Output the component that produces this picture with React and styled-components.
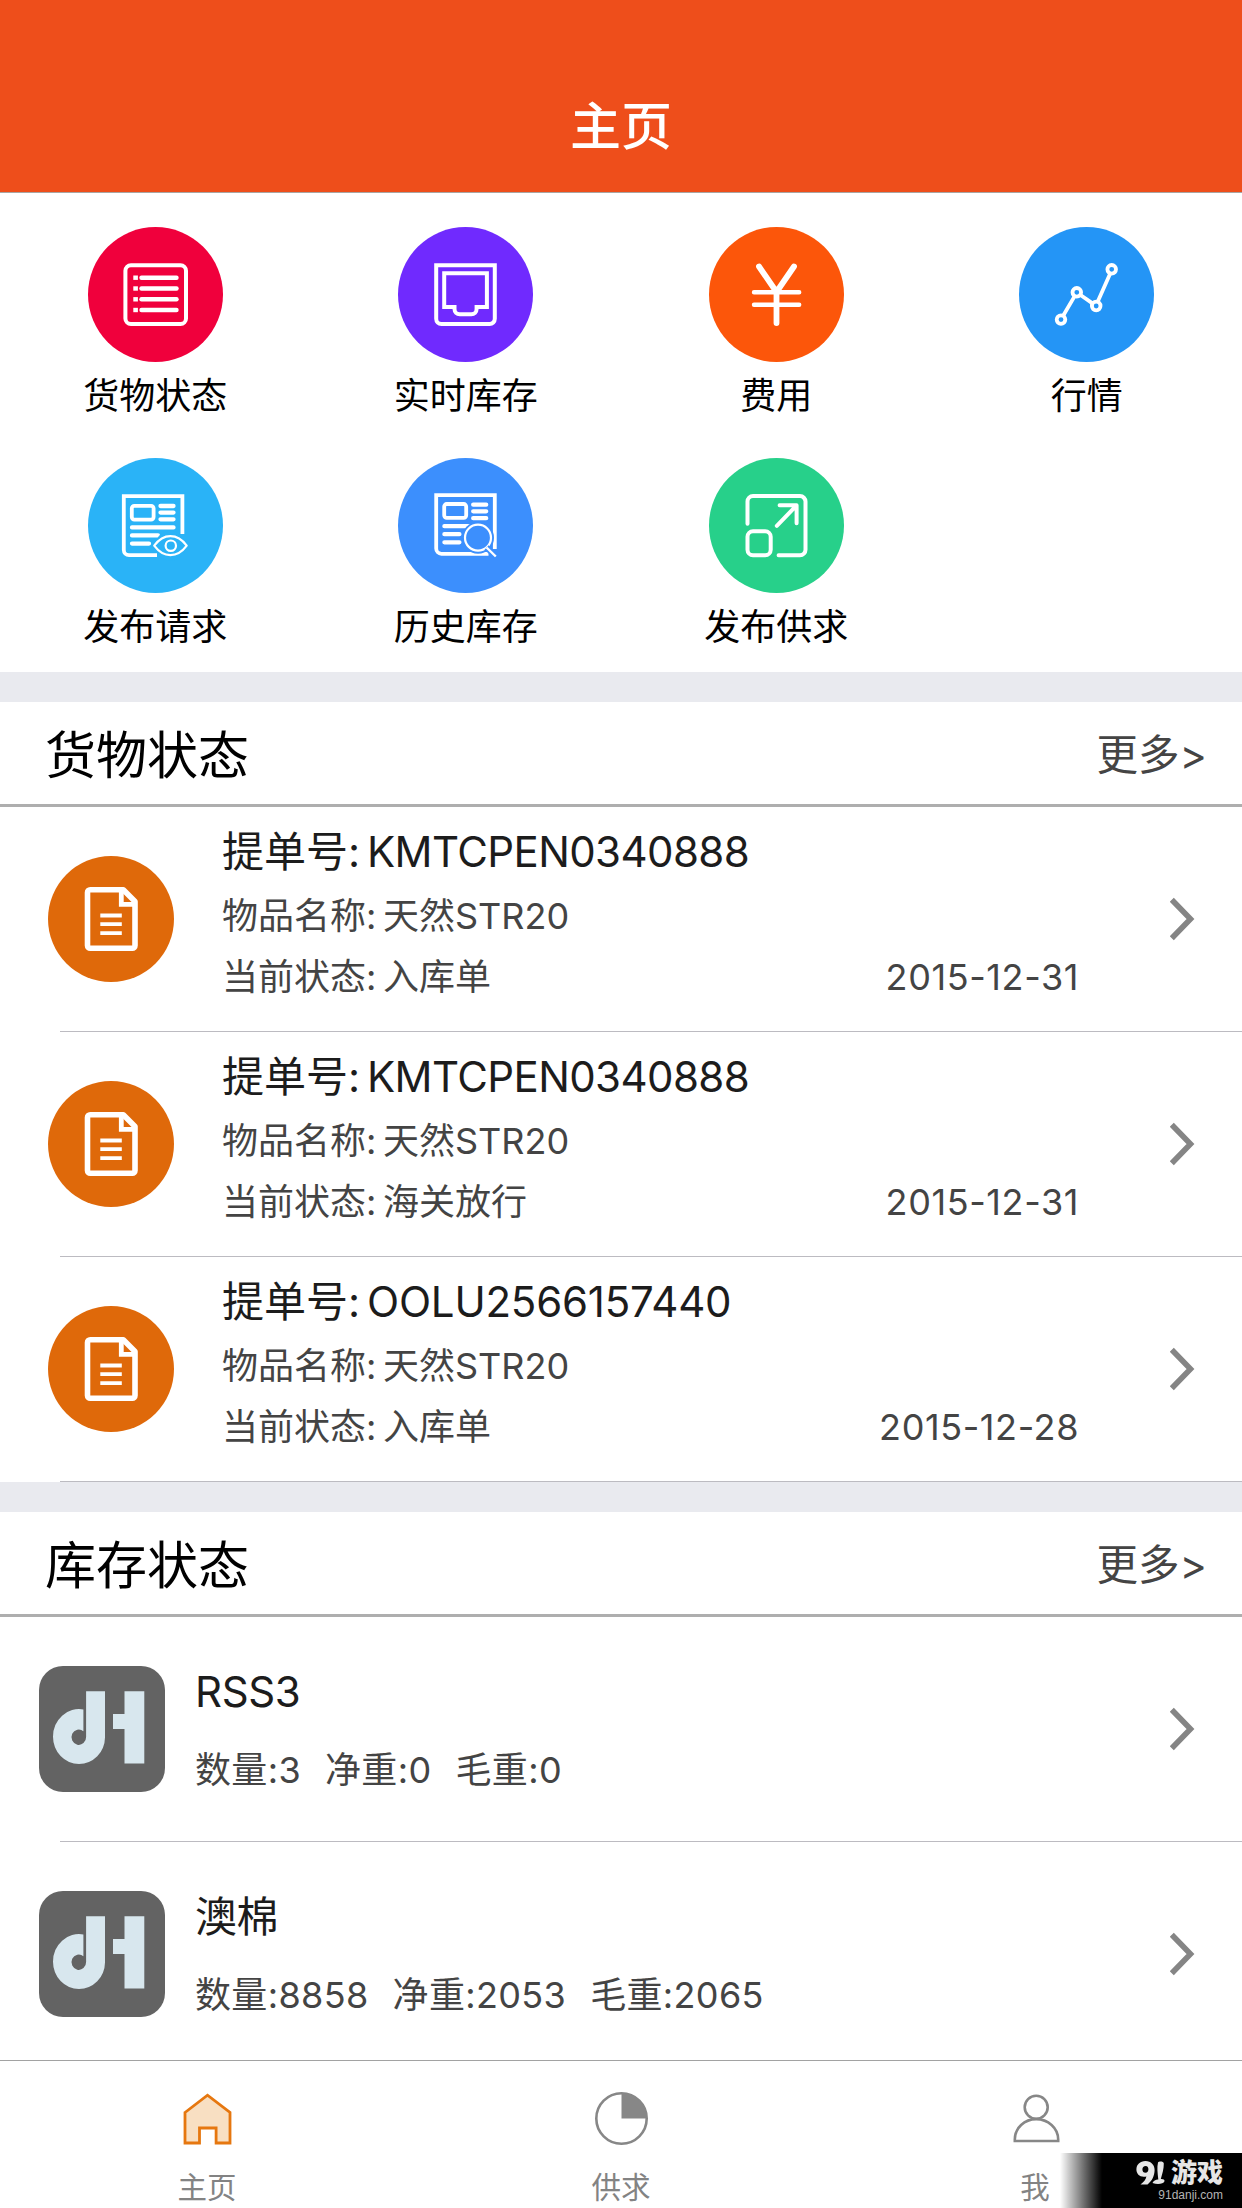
import React from 'react';
import styled, { createGlobalStyle } from 'styled-components';

const GlobalStyle = createGlobalStyle`
  *, *::before, *::after { box-sizing: border-box; }
  html, body { margin: 0; padding: 0; background: #fff; }
  body {
    font-family: Inter, "Noto Sans CJK SC", sans-serif;
    font-weight: 400;
    color: #000;
  }
`;

const Screen = styled.div`
  width: 1242px;
  height: 2208px;
  display: flex;
  flex-direction: column;
  overflow: hidden;
  background: #fff;
`;

const NavBar = styled.header`
  flex: none;
  height: 193px;
  padding-top: 61px;
  display: flex;
  align-items: center;
  justify-content: center;
  background: #ee4e1b;
  border-bottom: 1px solid #a9a5a3;
`;

const NavTitle = styled.h1`
  margin: 0;
  font-size: 51px;
  line-height: 60px;
  font-weight: 500;
  color: #fff;
`;

const Content = styled.main`
  flex: 1;
  min-height: 0;
  overflow: hidden;
`;

const MenuGrid = styled.nav`
  height: 479px;
  padding-top: 34px;
  display: grid;
  grid-template-columns: repeat(4, 1fr);
  grid-auto-rows: 231px;
`;

const MenuItem = styled.div`
  display: flex;
  flex-direction: column;
  align-items: center;
`;

const MenuIcon = styled.div`
  width: 135px;
  height: 135px;
  border-radius: 50%;
  background: ${(p) => p.$color};
`;

const MenuLabel = styled.span`
  margin-top: 10px;
  font-size: 36px;
  line-height: 48px;
`;

const Band = styled.div`
  height: 30px;
  background: #e9eaef;
`;

const SectionHead = styled.div`
  height: 105px;
  padding: 0 35px 0 45px;
  display: flex;
  align-items: center;
  justify-content: space-between;
  border-bottom: 3px solid #aeaeae;
`;

const SectionTitle = styled.h2`
  margin: 5px 0 0;
  font-size: 51px;
  line-height: 60px;
  font-weight: 400;
`;

const More = styled.span`
  margin-top: 3px;
  font-size: 41.5px;
  line-height: 50px;
  color: #444;
`;

const Row = styled.div`
  height: 225px;
  padding: 0 46px 2px ${(p) => p.$inset}px;
  display: flex;
  align-items: center;
  background: linear-gradient(#bcbbc1, #bcbbc1) right bottom / 1182px 1px no-repeat;
`;

const CargoIcon = styled.div`
  flex: none;
  width: 126px;
  height: 126px;
  border-radius: 50%;
  background: #df690a;
`;

const StockIcon = styled.div`
  flex: none;
  width: 126px;
  height: 126px;
  border-radius: 24px;
  background: #636363;
`;

const RowBody = styled.div`
  flex: 1;
  margin-left: ${(p) => p.$gap}px;
  height: 100%;
  padding-top: ${(p) => p.$top}px;
`;

const RowTitle = styled.div`
  font-size: 42px;
  line-height: 60px;
  height: ${(p) => p.$height || 60}px;
  display: flex;
  color: #1c1c1c;
  white-space: pre;
  letter-spacing: ${(p) => p.$track || 0}px;
`;

const RowLine = styled.div`
  font-size: 36px;
  line-height: 61px;
  height: 61px;
  display: flex;
  color: #444;
  white-space: pre;
`;

const Field = styled.span`
  width: ${(p) => p.$width}px;
  letter-spacing: 0;
`;

const Value = styled.span`
  letter-spacing: ${(p) => p.$track || 0}px;
`;

const DateText = styled.span`
  margin-left: auto;
  margin-right: 91px;
  letter-spacing: 0.6px;
`;

const Stats = styled(RowLine)`
  margin-top: 18px;
  gap: 24px;
`;

const TabBar = styled.footer`
  flex: none;
  height: 148px;
  display: grid;
  grid-template-columns: repeat(3, 1fr);
  border-top: 1px solid #a2a2a2;
  background: #fff;
  position: relative;
`;

const Tab = styled.div`
  padding-top: 29px;
  display: flex;
  flex-direction: column;
  align-items: center;
`;

const TabLabel = styled.span`
  margin-top: 21px;
  font-size: 29.5px;
  line-height: 40px;
  color: #838383;
`;

const Watermark = styled.div`
  position: absolute;
  right: 0;
  bottom: 0;
  width: 182px;
  height: 55px;
  padding: 5px 19px 0 0;
  display: flex;
  flex-direction: column;
  align-items: flex-end;
  background: linear-gradient(90deg, rgba(0, 0, 0, 0), #000 42px);
  color: #e6e6e6;
`;

const WatermarkName = styled.div`
  height: 30px;
  display: flex;
  align-items: center;
  gap: 6px;
  font-size: 26px;
  line-height: 30px;
  font-weight: 900;
`;

const WatermarkUrl = styled.div`
  font-family: "Liberation Sans", sans-serif;
  font-size: 12px;
  line-height: 14px;
  color: #b4b4b4;
`;

const Drawing = styled.svg`
  display: block;
`;

const Glyph = ({ size = 135, width = 4, children }) => (
  <Drawing
    width={size}
    height={size}
    viewBox={`0 0 ${size} ${size}`}
    fill="none"
    stroke="#fff"
    strokeWidth={width}
  >
    {children}
  </Drawing>
);

const ListGlyph = () => (
  <Glyph>
    <rect x="37.4" y="38.2" width="60.6" height="58.8" rx="5.5" />
    {[50.7, 61.5, 72.3, 83].map((y) => (
      <g key={y} strokeWidth="4.4">
        <path d={`M45.3 ${y}h4.6`} />
        <path d={`M53.5 ${y}h35`} strokeLinecap="round" />
      </g>
    ))}
  </Glyph>
);

const TrayGlyph = () => (
  <Glyph>
    <path d="M38.2 38.2h58.6v53.6a5.2 5.2 0 0 1-5.2 5.2h-48.2a5.2 5.2 0 0 1-5.2-5.2z" />
    <path d="M46.2 46.2h42.7v33.9h-10.3v2a5.2 5.2 0 0 1-5.2 5.2h-11.7a5.2 5.2 0 0 1-5.2-5.2v-2h-10.3z" />
  </Glyph>
);

const YenGlyph = () => (
  <Glyph width={5}>
    <g strokeLinecap="round">
      <path d="M50 39.5l17.5 25.5l17.5-25.5M67.5 65v31" strokeWidth="5.8" />
      <path d="M45 65.3h45.2M45 77.7h45.2" strokeWidth="4.4" />
    </g>
  </Glyph>
);

const TrendGlyph = () => (
  <Glyph width={3.8}>
    <circle cx="42" cy="92.6" r="4.3" />
    <circle cx="57.8" cy="65.3" r="4.3" />
    <circle cx="77.2" cy="79" r="4.3" />
    <circle cx="92.7" cy="42.3" r="4.3" />
    <path d="M44.3 88.5L55.5 69.4M61.5 68L73.5 76.4M78.8 74.6L91.1 46.7" />
  </Glyph>
);

const RequestGlyph = () => (
  <Glyph width={3.8}>
    <path d="M94.4 76V38.1H35.8V92a5.2 5.2 0 0 0 5.2 5.2h28" />
    <rect x="43.8" y="47.8" width="21.8" height="13.8" rx="2.5" />
    <path strokeLinecap="round" strokeWidth="4.3" d="M72.5 48h13M72.5 54.6h13M72.5 61.3h13M44 69.4h41.5M44 77.4h26M44 85.6h17" />
    <circle cx="82.4" cy="87.7" r="15" fill="#2ab3f7" stroke="none" />
    <path strokeWidth="2.2" strokeLinejoin="round" d="M66.2 87.7C72 80 77 78.2 82.4 78.2S93 80 98.7 87.7C93 95.4 87.8 97.2 82.4 97.2S72 95.4 66.2 87.7z" fill="#2ab3f7" />
    <circle cx="82.8" cy="87.7" r="5.2" strokeWidth="2.2" />
  </Glyph>
);

const HistoryGlyph = () => (
  <Glyph width={3.8}>
    <path d="M96.8 91V37.1H38.2V90.6a5.2 5.2 0 0 0 5.2 5.2H90.5" />
    <rect x="46.2" y="46" width="22" height="13.8" rx="2.5" />
    <path strokeLinecap="round" strokeWidth="4.3" d="M75.2 46.7h13M75.2 53.3h13M75.2 60.2h13M46.4 68.2h24M46.4 76.2h15M46.4 84.3h15" />
    <circle cx="80" cy="79.7" r="16" fill="#3c8ffd" stroke="none" />
    <circle cx="80" cy="79.7" r="13" strokeWidth="2.2" />
    <path d="M88.6 89.5l9.6 9.2" strokeWidth="6" stroke="#3c8ffd" />
    <path d="M88.6 89.5l9.2 9" strokeWidth="2.4" />
  </Glyph>
);

const ExpandGlyph = () => (
  <Glyph>
    <g strokeLinecap="round" strokeLinejoin="round">
      <path d="M38.5 65.8V43.6a5.5 5.5 0 0 1 5.5-5.5h47a5.5 5.5 0 0 1 5.5 5.5v48.1a5.5 5.5 0 0 1-5.5 5.5H69.6" />
      <rect x="38.5" y="73.2" width="23.2" height="24" rx="5.5" />
      <path d="M67.8 67.8L87.3 47.7M70.6 47.3h17v18" />
    </g>
  </Glyph>
);

const DocumentGlyph = () => (
  <Glyph size={126} width={5.6}>
    <path strokeLinejoin="round" d="M39.5 36.5a2.7 2.7 0 0 1 2.7-2.700H75.300L87 45.500V89.500a2.700 2.700 0 0 1-2.700 2.700H42.200a2.700 2.700 0 0 1-2.700-2.700z" />
    <path d="M73.300 34v14.400H87" strokeWidth="4.800" />
    <path d="M52.300 59.500h21.500M52.300 68.200h21.500M52.300 77.200h21.500" strokeWidth="3.800" />
  </Glyph>
);

const BrandGlyph = () => (
  <Drawing width="126" height="126" viewBox="0 0 126 126" fill="#d8e7ee">
    <path
      fillRule="evenodd"
      d="M47.1 25.3H66V71.5A26 26.800 0 0 1 40 98A26 27.300 0 0 1 14 70.700A26 27.300 0 0 1 44.400 43.500V65.200A7.300 7.700 0 1 0 47.100 71z"
    />
    <path d="M85.500 25.300h19.800v72.200H85.500V63H74V48h11.500z" />
  </Drawing>
);

const Chevron = () => (
  <Drawing width="26" height="44" viewBox="0 0 26 44" fill="none" stroke="#858585" strokeWidth="5.6">
    <path d="M1.8 2.8L20.5 22L1.8 41.2" />
  </Drawing>
);

const HomeIcon = () => (
  <Drawing width="56" height="56" viewBox="0 0 56 56" fill="#f8dfc2" stroke="#e6770f" strokeWidth="2.8">
    <path d="M6 22.5L28.5 5.2L51 22.5V53H37.1V38H20.5V53H6z" />
  </Drawing>
);

const PieIcon = () => (
  <Drawing width="56" height="56" viewBox="0 0 56 56" fill="none" stroke="#878787" strokeWidth="2.6">
    <circle cx="28.5" cy="28.5" r="25.2" />
    <path d="M28.5 3.3V28.5H53.7A25.2 25.2 0 0 0 28.5 3.3z" fill="#878787" stroke="none" />
  </Drawing>
);

const PersonIcon = () => (
  <Drawing width="56" height="56" viewBox="0 0 56 56" fill="none" stroke="#878787" strokeWidth="2.6">
    <circle cx="29.2" cy="17.3" r="11.5" />
    <path d="M7.8 51V49.5C7.8 38 17.5 29.1 29.2 29.1S51.2 38 51.2 49.5V51z" />
  </Drawing>
);

const NineOneMark = () => (
  <Drawing width="29" height="24" viewBox="0 0 29 24" fill="#e6e6e6">
    <path
      fillRule="evenodd"
      d="M9.5 0C15 0 18.7 4 18.6 9C18.5 15 16 20 11.5 23.5H4.5C8 21 9.7 18.500 10.400 15.500C4.500 17 .4 13.500.4 8.600C.4 3.500 4 0 9.500 0zM9.800 5C7.600 5 6.400 6.500 6.400 8.500S7.600 11.800 9.500 11.800S12.400 10 12.400 8.200S11.600 5 9.800 5z"
    />
    <path d="M22 1.500C23 0 27.500 0 27.800 2.500C27.900 8 26.200 13 24.800 18C27 17.800 28.800 18.500 28.500 20.200C27.500 22.800 22 24 16.500 22C17.500 19.500 20 18.200 22.300 18.400C21.600 12 20.800 6 22 1.500z" />
  </Drawing>
);

const MENU = [
  { label: '货物状态', color: '#f0003c', Icon: ListGlyph },
  { label: '实时库存', color: '#702afe', Icon: TrayGlyph },
  { label: '费用', color: '#fc560a', Icon: YenGlyph },
  { label: '行情', color: '#2495f6', Icon: TrendGlyph },
  { label: '发布请求', color: '#2ab3f7', Icon: RequestGlyph },
  { label: '历史库存', color: '#3c8ffd', Icon: HistoryGlyph },
  { label: '发布供求', color: '#27d08a', Icon: ExpandGlyph },
];

const CARGO = [
  { id: 1, no: 'KMTCPEN0340888', track: -0.6, name: '天然STR20', status: '入库单', date: '2015-12-31' },
  { id: 2, no: 'KMTCPEN0340888', track: -0.6, name: '天然STR20', status: '海关放行', date: '2015-12-31' },
  { id: 3, no: 'OOLU2566157440', track: -0.2, name: '天然STR20', status: '入库单', date: '2015-12-28' },
];

const STOCK = [
  { name: 'RSS3', stats: ['数量:3', '净重:0', '毛重:0'] },
  { name: '澳棉', stats: ['数量:8858', '净重:2053', '毛重:2065'] },
];

const TABS = [
  { label: '主页', Icon: HomeIcon },
  { label: '供求', Icon: PieIcon },
  { label: '我', Icon: PersonIcon },
];

const Section = ({ title, children }) => (
  <section>
    <Band />
    <SectionHead>
      <SectionTitle>{title}</SectionTitle>
      <More>更多&gt;</More>
    </SectionHead>
    {children}
  </section>
);

export default function App() {
  return (
    <>
      <GlobalStyle />
      <Screen>
        <NavBar>
          <NavTitle>主页</NavTitle>
        </NavBar>
        <Content>
          <MenuGrid>
            {MENU.map(({ label, color, Icon }) => (
              <MenuItem key={label}>
                <MenuIcon $color={color}>
                  <Icon />
                </MenuIcon>
                <MenuLabel>{label}</MenuLabel>
              </MenuItem>
            ))}
          </MenuGrid>
          <Section title="货物状态">
            {CARGO.map((c) => (
              <Row key={c.id} $inset={48}>
                <CargoIcon>
                  <DocumentGlyph />
                </CargoIcon>
                <RowBody $gap={48} $top={15}>
                  <RowTitle $height={64}>
                    <Field $width={145}>提单号:</Field>
                    <Value $track={c.track}>{c.no}</Value>
                  </RowTitle>
                  <RowLine>
                    <Field $width={161}>物品名称:</Field>
                    <Value>{c.name}</Value>
                  </RowLine>
                  <RowLine>
                    <Field $width={161}>当前状态:</Field>
                    <Value>{c.status}</Value>
                    <DateText>{c.date}</DateText>
                  </RowLine>
                </RowBody>
                <Chevron />
              </Row>
            ))}
          </Section>
          <Section title="库存状态">
            {STOCK.map((s) => (
              <Row key={s.name} $inset={39}>
                <StockIcon>
                  <BrandGlyph />
                </StockIcon>
                <RowBody $gap={30} $top={45}>
                  <RowTitle $track={-0.4}>{s.name}</RowTitle>
                  <Stats>
                    {s.stats.map((t) => (
                      <Value key={t} $track={0.35}>
                        {t}
                      </Value>
                    ))}
                  </Stats>
                </RowBody>
                <Chevron />
              </Row>
            ))}
          </Section>
        </Content>
        <TabBar>
          {TABS.map(({ label, Icon }) => (
            <Tab key={label}>
              <Icon />
              <TabLabel>{label}</TabLabel>
            </Tab>
          ))}
          <Watermark>
            <WatermarkName>
              <NineOneMark />
              游戏
            </WatermarkName>
            <WatermarkUrl>91danji.com</WatermarkUrl>
          </Watermark>
        </TabBar>
      </Screen>
    </>
  );
}
